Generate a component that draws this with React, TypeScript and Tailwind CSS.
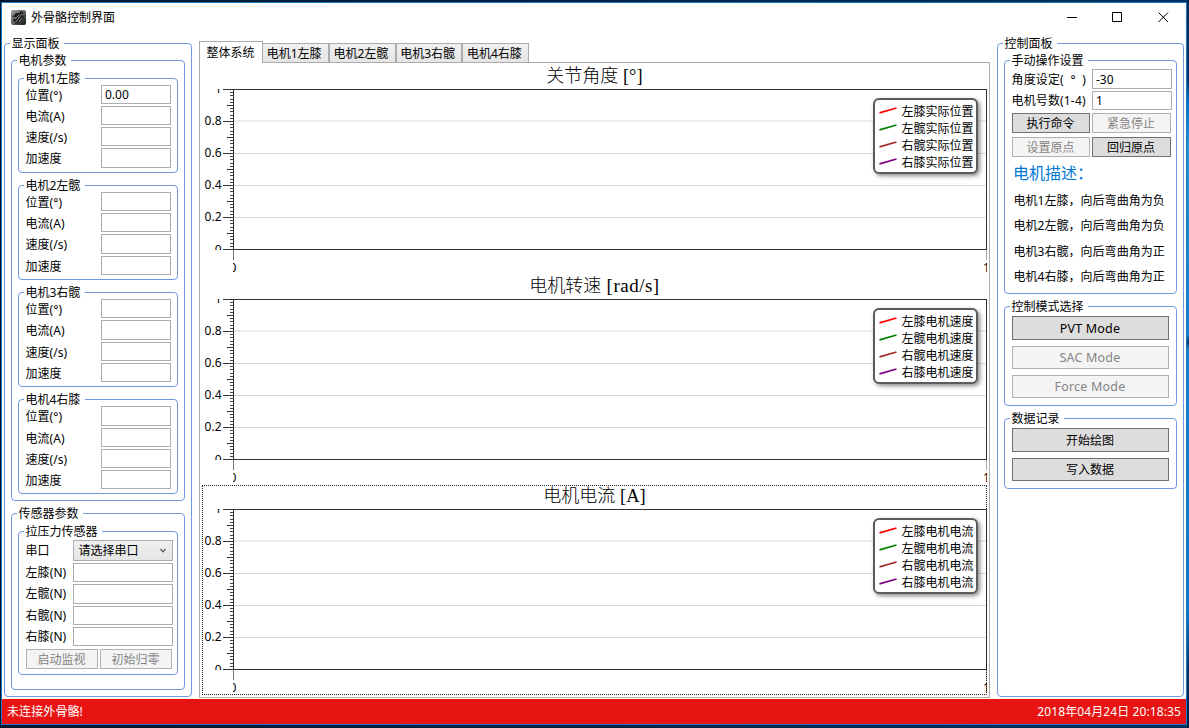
import React from "react";

const uiFont = "font-['Noto_Sans','Noto_Sans_CJK_SC',sans-serif]";

function Group({ title, className = "", children }: { title: string; className?: string; children?: React.ReactNode }) {
  return (
    <section className={`flex flex-col rounded-[4px] border border-[#6f98e0] ${className}`}>
      <h2 className="-mt-[9px] ml-[5px] h-[15px] w-fit shrink-0 whitespace-nowrap bg-white pl-[1.5px] pr-[4.5px] text-[12px] leading-[17px]">
        {title}
      </h2>
      {children}
    </section>
  );
}

function Field({ value = "", className = "" }: { value?: string; className?: string }) {
  return (
    <div className={`flex shrink-0 items-center border border-[#abadb3] bg-white pl-[3px] pt-px text-[12px] leading-none ${className}`}>
      {value}
    </div>
  );
}

function Button({ label, disabled, className = "" }: { label: string; disabled?: boolean; className?: string }) {
  const tone = disabled ? "border-[#adb2b5] bg-[#f4f4f4] text-[#838383]" : "border-[#707070] bg-[#dddddd] text-black";
  return (
    <button className={`flex shrink-0 items-center justify-center whitespace-nowrap border pr-px pt-[1.5px] leading-none ${tone} ${className}`}>
      {label}
    </button>
  );
}

function MotorGroup({ title, position }: { title: string; position?: string }) {
  const rows = ["位置(°)", "电流(A)", "速度(/s)", "加速度"];
  return (
    <Group title={title} className="mb-[12.3px] ml-[6px] h-[95px] w-[160px] shrink-0">
      {rows.map((r, i) => (
        <div key={r} className="flex h-[21.25px] shrink-0 items-start pl-[6.5px]">
          <span className="w-[75.5px] text-[12px] leading-[21px] tracking-[0.05px]">{r}</span>
          <Field value={i === 0 ? position : ""} className="h-[19.3px] w-[70px]" />
        </div>
      ))}
    </Group>
  );
}

const ticks = Array.from({ length: 51 }, (_, i) => i);
const seriesColors = ["#ff0000", "#008000", "#a52a2a", "#800080"];

function Chart({ id, name, unit, wide, series, focused }: { id: string; name: string; unit: string; wide?: boolean; series: string[]; focused?: boolean }) {
  return (
    <div className="relative flex h-[210px] w-[785px] flex-col">
      <div className="h-[24px] whitespace-pre text-center font-['Liberation_Serif','Noto_Sans_CJK_SC',serif] text-[18px] font-light leading-[22px]">
        {name}
        <span className={wide ? "text-[19px] tracking-[0.5px]" : "text-[18.5px]"}>{` ${unit}`}</span>
      </div>
      <svg width="785" height="186" className="block text-[12px]">
        <defs>
          <clipPath id={`y-${id}`}>
            <rect x="0" y="0" width="31" height="161" />
          </clipPath>
          <clipPath id={`x-${id}`}>
            <rect x="31" y="161" width="754" height="25" />
          </clipPath>
        </defs>
        {[32, 64.5, 96.5, 128.5].map((y) => (
          <line key={y} x1="32" x2="784" y1={y} y2={y} stroke="#d8d8d8" />
        ))}
        {ticks.map((i) => {
          const len = i % 10 === 0 ? 10 : i % 5 === 0 ? 6 : 3;
          const y = Math.round(i * 3.2) + 0.5;
          return (
            <line key={i} x1={31 - len} x2="31" y1={y} y2={y} stroke={i % 5 === 0 ? "#333" : "#444"} />
          );
        })}
        <rect x="31.5" y="0.5" width="753" height="160" fill="none" stroke="#303030" />
        <line x1="31.5" x2="31.5" y1="161" y2="171" stroke="#777" />
        <line x1="784.5" x2="784.5" y1="161" y2="171" stroke="#aaa" />
        <g clipPath={`url(#y-${id})`} textAnchor="end">
          {["1", "0.8", "0.6", "0.4", "0.2", "0"].map((t, i) => (
            <text key={t} x="19.5" y={i * 32 + (i === 0 ? 3.5 : i === 5 ? 4.5 : 4)}>
              {t}
            </text>
          ))}
        </g>
        <g clipPath={`url(#x-${id})`} textAnchor="middle">
          <text x="31" y="182.5">0</text>
          <text x="784.5" y="182.5">1</text>
        </g>
      </svg>
      <div className="absolute left-[671px] top-[33px] flex h-[76px] w-[105px] flex-col rounded-[6px] border-2 border-[#5c5c5c] bg-white pl-[4px] pt-[2.5px] shadow-[2px_2px_4px_rgba(0,0,0,0.45)]">
        {series.map((s, i) => (
          <div key={s} className="flex h-[17.1px] items-center">
            <svg width="18" height="8" className="shrink-0">
              <line x1="0.5" y1="5.8" x2="17.5" y2="1" stroke={seriesColors[i]} strokeWidth="1.8" />
            </svg>
            <span className="ml-[4.5px] whitespace-nowrap text-[12px] leading-[17px]">{s}</span>
          </div>
        ))}
      </div>
      {focused && <div className="absolute inset-0 border border-dotted border-[#222]" />}
    </div>
  );
}

export default function App() {
  return (
    <div className={`flex h-[728px] w-[1189px] overflow-hidden bg-[linear-gradient(180deg,#02264c_0%,#00396c_11%,#0075c8_14%,#2493d3_20%,#1680cc_46%,#013763_47%,#1582cc_48%,#0a79c8_84%,#013361_92%,#001b38_100%)] text-black ${uiFont}`}>
      <div className="h-[728px] w-[1187px] bg-[linear-gradient(90deg,#02152d,#01305d)] pl-px pt-[2px]">
        <main className="flex h-[723px] w-[1186px] flex-col border border-[#1979ca] bg-white">
          <header className="flex h-[29px] shrink-0 items-center pl-[9px]">
            <svg width="15" height="15" viewBox="0 0 15 15" className="-mt-px">
              <defs>
                <linearGradient id="appicon" x1="0" y1="0" x2="1" y2="1">
                  <stop offset="0" stopColor="#a0a0a0" />
                  <stop offset="0.5" stopColor="#666" />
                  <stop offset="1" stopColor="#111" />
                </linearGradient>
              </defs>
              <rect width="15" height="15" rx="2" fill="url(#appicon)" />
              <path d="M1 7 5 3l3 0 2-2 3 2-2 1 2 3-2 4-3 2-4 1 1-3-2 1-1-2 3-3-2 0z" fill="#222" />
              <path d="M5 12 9 6l2-2M4 9l4-4M8 12l3-4" stroke="#8c8c8c" fill="none" />
            </svg>
            <h1 className="ml-[5px] text-[12px] leading-none">外骨骼控制界面</h1>
            <svg width="102" height="12" className="-mt-[2px] ml-auto mr-[17px]" fill="none" stroke="black">
              <path d="M0 6.5h10M45.5 1.5h9v9h-9zM91.5 1.5l9.5 9.5M101 1.5l-9.5 9.5" />
            </svg>
          </header>

          <div className="flex h-[667px] shrink-0 items-start pl-[2px] pt-[11px]">
            <Group title="显示面板" className="h-[654px] w-[188px]">
              <Group title="电机参数" className="ml-[6px] mt-[10px] h-[441px] w-[174px] shrink-0">
                <div className="mt-[10.55px] flex flex-col">
                  <MotorGroup title="电机1左膝" position="0.00" />
                  <MotorGroup title="电机2左髋" />
                  <MotorGroup title="电机3右髋" />
                  <MotorGroup title="电机4右膝" />
                </div>
              </Group>
              <Group title="传感器参数" className="ml-[6px] mt-[12px] h-[177px] w-[174px] shrink-0">
                <Group title="拉压力传感器" className="ml-[6px] mt-[11px] h-[144px] w-[160px] shrink-0">
                  <div className="mt-[2px] flex h-[23px] shrink-0 pl-[6.5px]">
                    <span className="w-[47.5px] text-[12px] leading-[21px]">串口</span>
                    <div className="flex h-[21px] w-[100px] items-center justify-between border border-[#acacac] bg-gradient-to-b from-[#f0f0f0] to-[#e5e5e5] pl-[4.5px] pr-[6px] text-[12px] leading-none">
                      请选择串口
                      <svg width="6" height="5" className="-mt-px" fill="none" stroke="#555" strokeWidth="1.2">
                        <path d="M.5 1 3 3.8 5.5 1" />
                      </svg>
                    </div>
                  </div>
                  {["左膝(N)", "左髋(N)", "右髋(N)", "右膝(N)"].map((t) => (
                    <div key={t} className="flex h-[21.35px] shrink-0 pl-[6.5px]">
                      <span className="w-[47.5px] text-[12px] leading-[20.5px] tracking-[0.1px]">{t}</span>
                      <Field className="h-[19.3px] w-[100px]" />
                    </div>
                  ))}
                  <div className="mt-[0.6px] flex gap-[2px] pl-[7px]">
                    <Button label="启动监视" disabled className="h-[20px] w-[72px] text-[12px]" />
                    <Button label="初始归零" disabled className="h-[20px] w-[72px] text-[12px]" />
                  </div>
                </Group>
              </Group>
            </Group>

            <div className="-mt-[2px] ml-[7px] flex w-[791px] flex-col">
              <nav className="flex h-[21px] items-end text-[12px]">
                <div className="z-10 -mb-px flex h-[22px] w-[64px] items-center justify-center border border-b-0 border-[#acacac] bg-white pr-px leading-none">
                  整体系统
                </div>
                <div className="-ml-px flex">
                  {["电机1左膝", "电机2左髋", "电机3右髋", "电机4右膝"].map((t) => (
                    <div key={t} className="flex h-[19px] w-[66.75px] items-center justify-center border border-b-0 border-[#acacac] bg-gradient-to-b from-[#f0f0f0] to-[#e5e5e5] pr-[2.5px] pt-px leading-none">
                      {t}
                    </div>
                  ))}
                </div>
              </nav>
              <div className="flex h-[636px] flex-col border border-[#acacac] pl-[2px] pt-[2px]">
                <Chart id="angle" name="关节角度" unit="[°]" series={["左膝实际位置", "左髋实际位置", "右髋实际位置", "右膝实际位置"]} />
                <Chart id="speed" name="电机转速" unit="[rad/s]" wide series={["左膝电机速度", "左髋电机速度", "右髋电机速度", "右膝电机速度"]} />
                <Chart id="current" name="电机电流" unit="[A]" series={["左膝电机电流", "左髋电机电流", "右髋电机电流", "右膝电机电流"]} focused />
              </div>
            </div>

            <Group title="控制面板" className="ml-[7px] h-[654px] w-[187px]">
              <Group title="手动操作设置" className="ml-[6px] mt-[10px] h-[234px] w-[173px] shrink-0">
                <div className="mt-[2px] flex h-[22px] shrink-0 pl-[6.5px] text-[12px]">
                  <span className="w-[80.5px] whitespace-pre leading-[22px] tracking-[0.15px]">{"角度设定(  °  )"}</span>
                  <Field value="-30" className="h-[20px] w-[80px]" />
                </div>
                <div className="flex h-[22px] shrink-0 pl-[6.5px] text-[12px]">
                  <span className="w-[80.5px] whitespace-nowrap leading-[20px] tracking-[0.15px]">电机号数(1-4)</span>
                  <Field value="1" className="h-[19px] w-[80px]" />
                </div>
                <div className="grid grid-cols-[78px_79px] gap-x-[2px] gap-y-[4px] pl-[7px] text-[12px]">
                  <Button label="执行命令" className="h-[20px]" />
                  <Button label="紧急停止" disabled className="h-[20px]" />
                  <Button label="设置原点" disabled className="h-[20px]" />
                  <Button label="回归原点" className="h-[20px]" />
                </div>
                <h3 className="mt-[5px] h-[26px] pl-[8px] text-[16px] leading-[23px] text-[#0078d7]">电机描述：</h3>
                <ul className="pl-[8.5px] text-[12px] leading-[25.4px] tracking-[0.03px]">
                  <li className="whitespace-nowrap">电机1左膝，向后弯曲角为负</li>
                  <li className="whitespace-nowrap">电机2左髋，向后弯曲角为负</li>
                  <li className="whitespace-nowrap">电机3右髋，向后弯曲角为正</li>
                  <li className="whitespace-nowrap">电机4右膝，向后弯曲角为正</li>
                </ul>
              </Group>
              <Group title="控制模式选择" className="ml-[6px] mt-[12px] h-[100px] w-[173px] shrink-0">
                <div className="mt-[3px] flex flex-col gap-[6px] pl-[7px] text-[12.5px] tracking-[0.2px]">
                  <Button label="PVT Mode" className="h-[24px] w-[157px]" />
                  <Button label="SAC Mode" disabled className="h-[23px] w-[157px]" />
                  <Button label="Force Mode" disabled className="h-[23px] w-[157px]" />
                </div>
              </Group>
              <Group title="数据记录" className="ml-[6px] mt-[12px] h-[71px] w-[173px] shrink-0">
                <div className="mt-[3px] flex flex-col gap-[6px] pl-[7px] text-[12px]">
                  <Button label="开始绘图" className="h-[24px] w-[157px]" />
                  <Button label="写入数据" className="h-[23px] w-[157px]" />
                </div>
              </Group>
            </Group>
          </div>

          <footer className="flex h-[25px] shrink-0 items-center justify-between bg-[#e81414] pl-[5px] pr-[5px] text-[12px] leading-none tracking-[0.1px] text-white">
            <span>未连接外骨骼!</span>
            <span>2018年04月24日 20:18:35</span>
          </footer>
        </main>
      </div>
    </div>
  );
}
